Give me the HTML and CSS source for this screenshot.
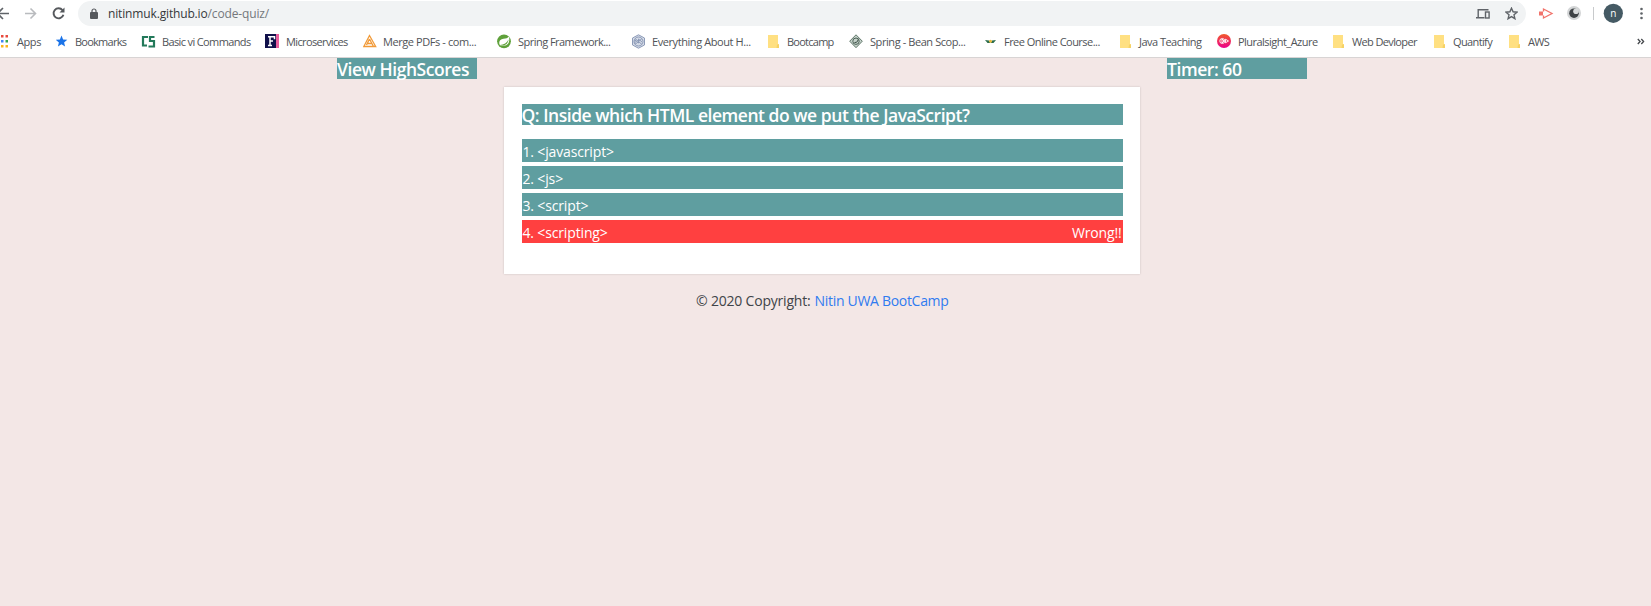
FILE: index.html
```html
<!DOCTYPE html>
<html lang="en">
<head>
<meta charset="utf-8">
<title>Code Quiz</title>
<link rel="stylesheet" href="styles.css">
</head>
<body>
<header class="browser">
  <div class="toolbar">
    <svg class="nav-icons" width="78" height="26" viewBox="0 0 78 26" fill="none" stroke-width="1.6">
      <path d="M9 13.5H-2M3 8l-5.500 5.500L3 19" stroke="#5f6368"/>
      <path d="M25 13.500h10.500M30.500 8.500l5 5-5 5" stroke="#b9bbbe"/>
      <path d="M62.500 10.200a5 5 0 1 0 .9 4.500" stroke="#55585c" stroke-width="1.900"/>
      <path d="M64.500 7.500v5h-5z" fill="#55585c"/>
    </svg>
    <div class="omnibox">
      <svg class="lock" width="8" height="11" viewBox="0 0 8 11"><rect y="4" width="8" height="7" rx="1" fill="#55585c"/><path d="M2 5V3a2 2 0 0 1 4 0v2" fill="none" stroke="#55585c" stroke-width="1.200"/></svg>
      <span class="url">nitinmuk.github.io<span class="path">/code-quiz/</span></span>
      <svg class="install" width="14" height="10" viewBox="0 0 14 10" fill="none" stroke="#5f6368" stroke-width="1.400"><path d="M12.500 .7H2.200v7.500M0 8.700h8.500"/><rect x="9.500" y="3" width="3.600" height="6"/></svg>
      <svg class="star" width="13" height="13" viewBox="0 0 13 13" fill="none" stroke="#5f6368" stroke-width="1.400"><path d="M6.500 1.200l1.600 3.600 3.900.4-3 2.600.9 3.900-3.400-2.100-3.400 2.100.9-3.900-3-2.600 3.900-.4z"/></svg>
    </div>
    <svg class="ext-icons" width="125" height="26" viewBox="0 0 125 26">
      <path d="M17.500 11.500V9l8.500 4.500-8.500 4.500v-2.500" fill="none" stroke="#f1736b" stroke-width="1.300"/>
      <rect x="13" y="11.500" width="4" height="4" fill="#f1736b"/>
      <circle cx="48" cy="13" r="7" fill="#d3d5d6"/><circle cx="48" cy="13.200" r="4.800" fill="#3f4346"/><circle cx="50" cy="11.300" r="2.800" fill="#d8dadb"/>
      <path d="M67.500 7v13" stroke="#c8cacc"/>
      <circle cx="87.300" cy="13.300" r="9.600" fill="#455a64"/>
      <text x="87.300" y="16.800" class="avatar">n</text>
      <g fill="#5f6368"><circle cx="115.500" cy="9" r="1.300"/><circle cx="115.500" cy="13.500" r="1.300"/><circle cx="115.500" cy="18" r="1.300"/></g>
    </svg>
  </div>
  <nav class="bookmarks">
    <a class="bm"><svg width="15" height="15" viewBox="0 0 15 15"><g fill="#e8493d"><path d="M2 1h3v3H2z"/><path d="M7 1h2.500v2.500H7z"/><path d="M11.500 1H14v2.500h-2.500z"/></g><path d="M7 6h2.500v2.500H7z" fill="#4285f4"/><path d="M11.500 6H14v2.500h-2.500z" fill="#34a853"/><path d="M7 11h2.500v2.500H7zM11.500 11H14v2.500h-2.500z" fill="#fbb51b"/></svg><span>Apps</span></a>
    <a class="bm tight"><svg width="15" height="15" viewBox="0 0 15 15"><path d="M5.500 1.500l1.600 3.900 4.200.3-3.200 2.700 1 4.100-3.600-2.200-3.600 2.200 1-4.100L-.3 5.700l4.200-.3z" fill="#1a73e8"/></svg><span>Bookmarks</span></a>
    <a class="bm snug"><svg width="15" height="15" viewBox="0 0 15 15" fill="none" stroke="#23795a" stroke-width="2.200"><path d="M7 3H2v8.500h4M13.500 3H9v4h4v5.500H7.500"/></svg><span>Basic vi Commands</span></a>
    <a class="bm snug"><svg width="15" height="15" viewBox="0 0 15 15"><path d="M0 0h11v14H0z" fill="#10104a"/><path d="M11 0h3v14h-3z" fill="#e85f9c"/><path d="M3 2.700h6.500v2.500M5 2.700v9M3 11.500h4M5 7h3" stroke="#fff" stroke-width="1.500" fill="none"/></svg><span>Microservices</span></a>
    <a class="bm"><svg width="15" height="15" viewBox="0 0 15 15" fill="none" stroke="#f19a38" stroke-width="1.300"><path d="M6.500 1.500L.8 12.500h11.900zM6.500 5L3.500 11M6.500 5l4 7.500M4.500 9.500h4"/></svg><span>Merge PDFs - com...</span></a>
    <a class="bm loose"><svg width="15" height="15" viewBox="0 0 15 15"><circle cx="7" cy="7.300" r="6.900" fill="#5fa13a"/><path d="M12 2.500c1 5-.5 8.500-4 9H3.500l-1-1c-1-4 1.500-5.500 4-5.800 2.500-.2 4-.5 5.500-2.200z" fill="#fff"/><path d="M3 11c4-.5 7-2 8.500-5.500C11 10.500 7.500 12 3 11z" fill="#5fa13a"/></svg><span>Spring Framework...</span></a>
    <a class="bm"><svg width="15" height="15" viewBox="0 0 15 15" fill="none" stroke="#8d9bb8" stroke-width="1"><path d="M7.500.8l6 3.200v7l-6 3.200-6-3.200V4z" fill="#d5dbe7"/><circle cx="7.500" cy="7.500" r="4.500"/><path d="M4 10V6l3.500 3V5L11 8M4 4.500l7 6M11 4.500l-7 6"/></svg><span>Everything About H...</span></a>
    <a class="bm folder tight"><svg width="12" height="15" viewBox="0 0 12 15"><path d="M0 1h10v9h1v4H0z" fill="#ffe082"/><path d="M9 10.500h2V14H8.500z" fill="#f6d265"/></svg><span>Bootcamp</span></a>
    <a class="bm"><svg width="15" height="15" viewBox="0 0 15 15" fill="none" stroke="#61786b"><path d="M7 .8l6.300 6.400L7 13.700.7 7.200z" fill="#c5d1ca"/><circle cx="7" cy="7.200" r="3.200" stroke="#4b6156"/><path d="M5.500 8.500c3 0 3-1 3.500-3" stroke="#34483e"/></svg><span>Spring - Bean Scop...</span></a>
    <a class="bm loose free"><svg width="15" height="15" viewBox="0 0 15 15"><path d="M0 6l4 .5 1.500 2.500H2.500zM11 6l-4 .5-1.500 2.500h3z" fill="#2b6c4c"/><circle cx="5.500" cy="7.300" r="1.500" fill="#e7b93c"/></svg><span>Free Online Course...</span></a>
    <a class="bm folder loose"><svg width="12" height="15" viewBox="0 0 12 15"><path d="M0 1h10v9h1v4H0z" fill="#ffe082"/><path d="M9 10.500h2V14H8.500z" fill="#f6d265"/></svg><span>Java Teaching</span></a>
    <a class="bm loose"><svg width="15" height="15" viewBox="0 0 15 15"><defs><linearGradient id="ps" x2="0" y2="1"><stop stop-color="#f15b2a"/><stop offset="1" stop-color="#ec008c"/></linearGradient></defs><circle cx="7" cy="7" r="7" fill="url(#ps)"/><g fill="none" stroke="#fff" stroke-width=".9"><circle cx="5.300" cy="7" r="2.500"/><path d="M5 5v4l2-2zM8.500 5.200v3.600L11.500 7z"/></g></svg><span>Pluralsight_Azure</span></a>
    <a class="bm folder snug"><svg width="12" height="15" viewBox="0 0 12 15"><path d="M0 1h10v9h1v4H0z" fill="#ffe082"/><path d="M9 10.500h2V14H8.500z" fill="#f6d265"/></svg><span>Web Devloper</span></a>
    <a class="bm folder snug"><svg width="12" height="15" viewBox="0 0 12 15"><path d="M0 1h10v9h1v4H0z" fill="#ffe082"/><path d="M9 10.500h2V14H8.500z" fill="#f6d265"/></svg><span>Quantify</span></a>
    <a class="bm folder snug"><svg width="12" height="15" viewBox="0 0 12 15"><path d="M0 1h10v9h1v4H0z" fill="#ffe082"/><path d="M9 10.500h2V14H8.500z" fill="#f6d265"/></svg><span>AWS</span></a>
    <svg width="8" height="15" viewBox="0 0 8 15" fill="none" stroke="#45484c" stroke-width="1.300"><path d="M.8 5l2.300 2.500L.8 10M4.300 5l2.300 2.500L4.300 10"/></svg>
  </nav>
</header>
<div class="status">
  <div class="tag">View HighScores</div>
  <div class="tag">Timer: 60</div>
</div>
<main class="card">
  <h1 class="question">Q: Inside which HTML element do we put the JavaScript?</h1>
  <div class="option"><span>1. &lt;javascript&gt;</span></div>
  <div class="option"><span>2. &lt;js&gt;</span></div>
  <div class="option"><span>3. &lt;script&gt;</span></div>
  <div class="option wrong"><span>4. &lt;scripting&gt;</span><span>Wrong!!</span></div>
</main>
<footer class="footer">© 2020 Copyright: <a class="link">Nitin UWA BootCamp</a></footer>
</body>
</html>
```
FILE: styles.css
```css
* { box-sizing: border-box; }
body {
  margin: 0;
  height: 606px;
  overflow: hidden;
  background: #f3e7e6;
  font-family: "Open Sans", "Noto Sans", sans-serif;
}
svg { display: block; flex: none; }
.browser { height: 58px; background: #fff; border-bottom: 1px solid #d8d4d4; }
.toolbar { display: flex; height: 26px; }
.omnibox {
  display: flex;
  align-items: center;
  width: 1448px;
  height: 25px;
  margin-top: 1px;
  padding: 0 8px 0 12px;
  border-radius: 13px;
  background: #f1f3f4;
}
.url { margin-left: 10px; font-size: 12px; letter-spacing: -0.15px; color: #35383b; white-space: nowrap; }
.path { color: #74787c; }
.install { margin-left: auto; }
.star { margin-left: 15px; }
.avatar { font-size: 10px; fill: #fff; text-anchor: middle; }
.bookmarks {
  display: grid;
  grid-template-columns: 62px 85px 124px 98px 134px 134px 137px 81px 136px 135px 97px 116px 101px 75px 128px 8px;
  align-items: center;
  height: 31px;
  margin-left: -6px;
}
.bm { display: flex; align-items: center; gap: 6px; font-size: 11px; letter-spacing: -0.42px; color: #505357; white-space: nowrap; }
.loose { letter-spacing: -0.53px; }
.snug { letter-spacing: -0.63px; }
.tight { letter-spacing: -0.75px; }
.folder { gap: 7px; }
.bm:first-child { gap: 8px; }
.bm:nth-child(2) { gap: 4px; }
.bm:nth-child(5) { gap: 5px; }
.free { gap: 4px; }
.status { display: flex; justify-content: space-between; width: 970px; margin-left: 337px; }
.tag { width: 140px; height: 21px; background: #5f9ea0; color: #fff; font-size: 17.5px; font-weight: 600; letter-spacing: -0.44px; line-height: 23px; white-space: nowrap; }
.card {
  width: 636px;
  height: 187px;
  margin: 8px 0 0 504px;
  padding: 17px 17.5px;
  background: #fff;
  box-shadow: 0 0 2px rgba(0, 0, 0, 0.18);
}
.question { height: 21px; margin: 0 0 14px; background: #5f9ea0; color: #fff; font-size: 17.5px; font-weight: 600; letter-spacing: -0.47px; line-height: 23px; white-space: nowrap; }
.option { display: flex; justify-content: space-between; height: 23px; margin-bottom: 4px; padding: 0 1px; background: #5f9ea0; color: #fff; font-size: 14px; letter-spacing: -0.15px; line-height: 25px; white-space: nowrap; }
.wrong { background: #ff4040; }
.footer { display: flex; gap: 4px; width: 252px; margin: 16px 0 0 696px; font-size: 14px; letter-spacing: -0.2px; line-height: 21px; color: #404448; white-space: nowrap; }
.link { color: #2f7bf0; letter-spacing: -0.3px; }
```
